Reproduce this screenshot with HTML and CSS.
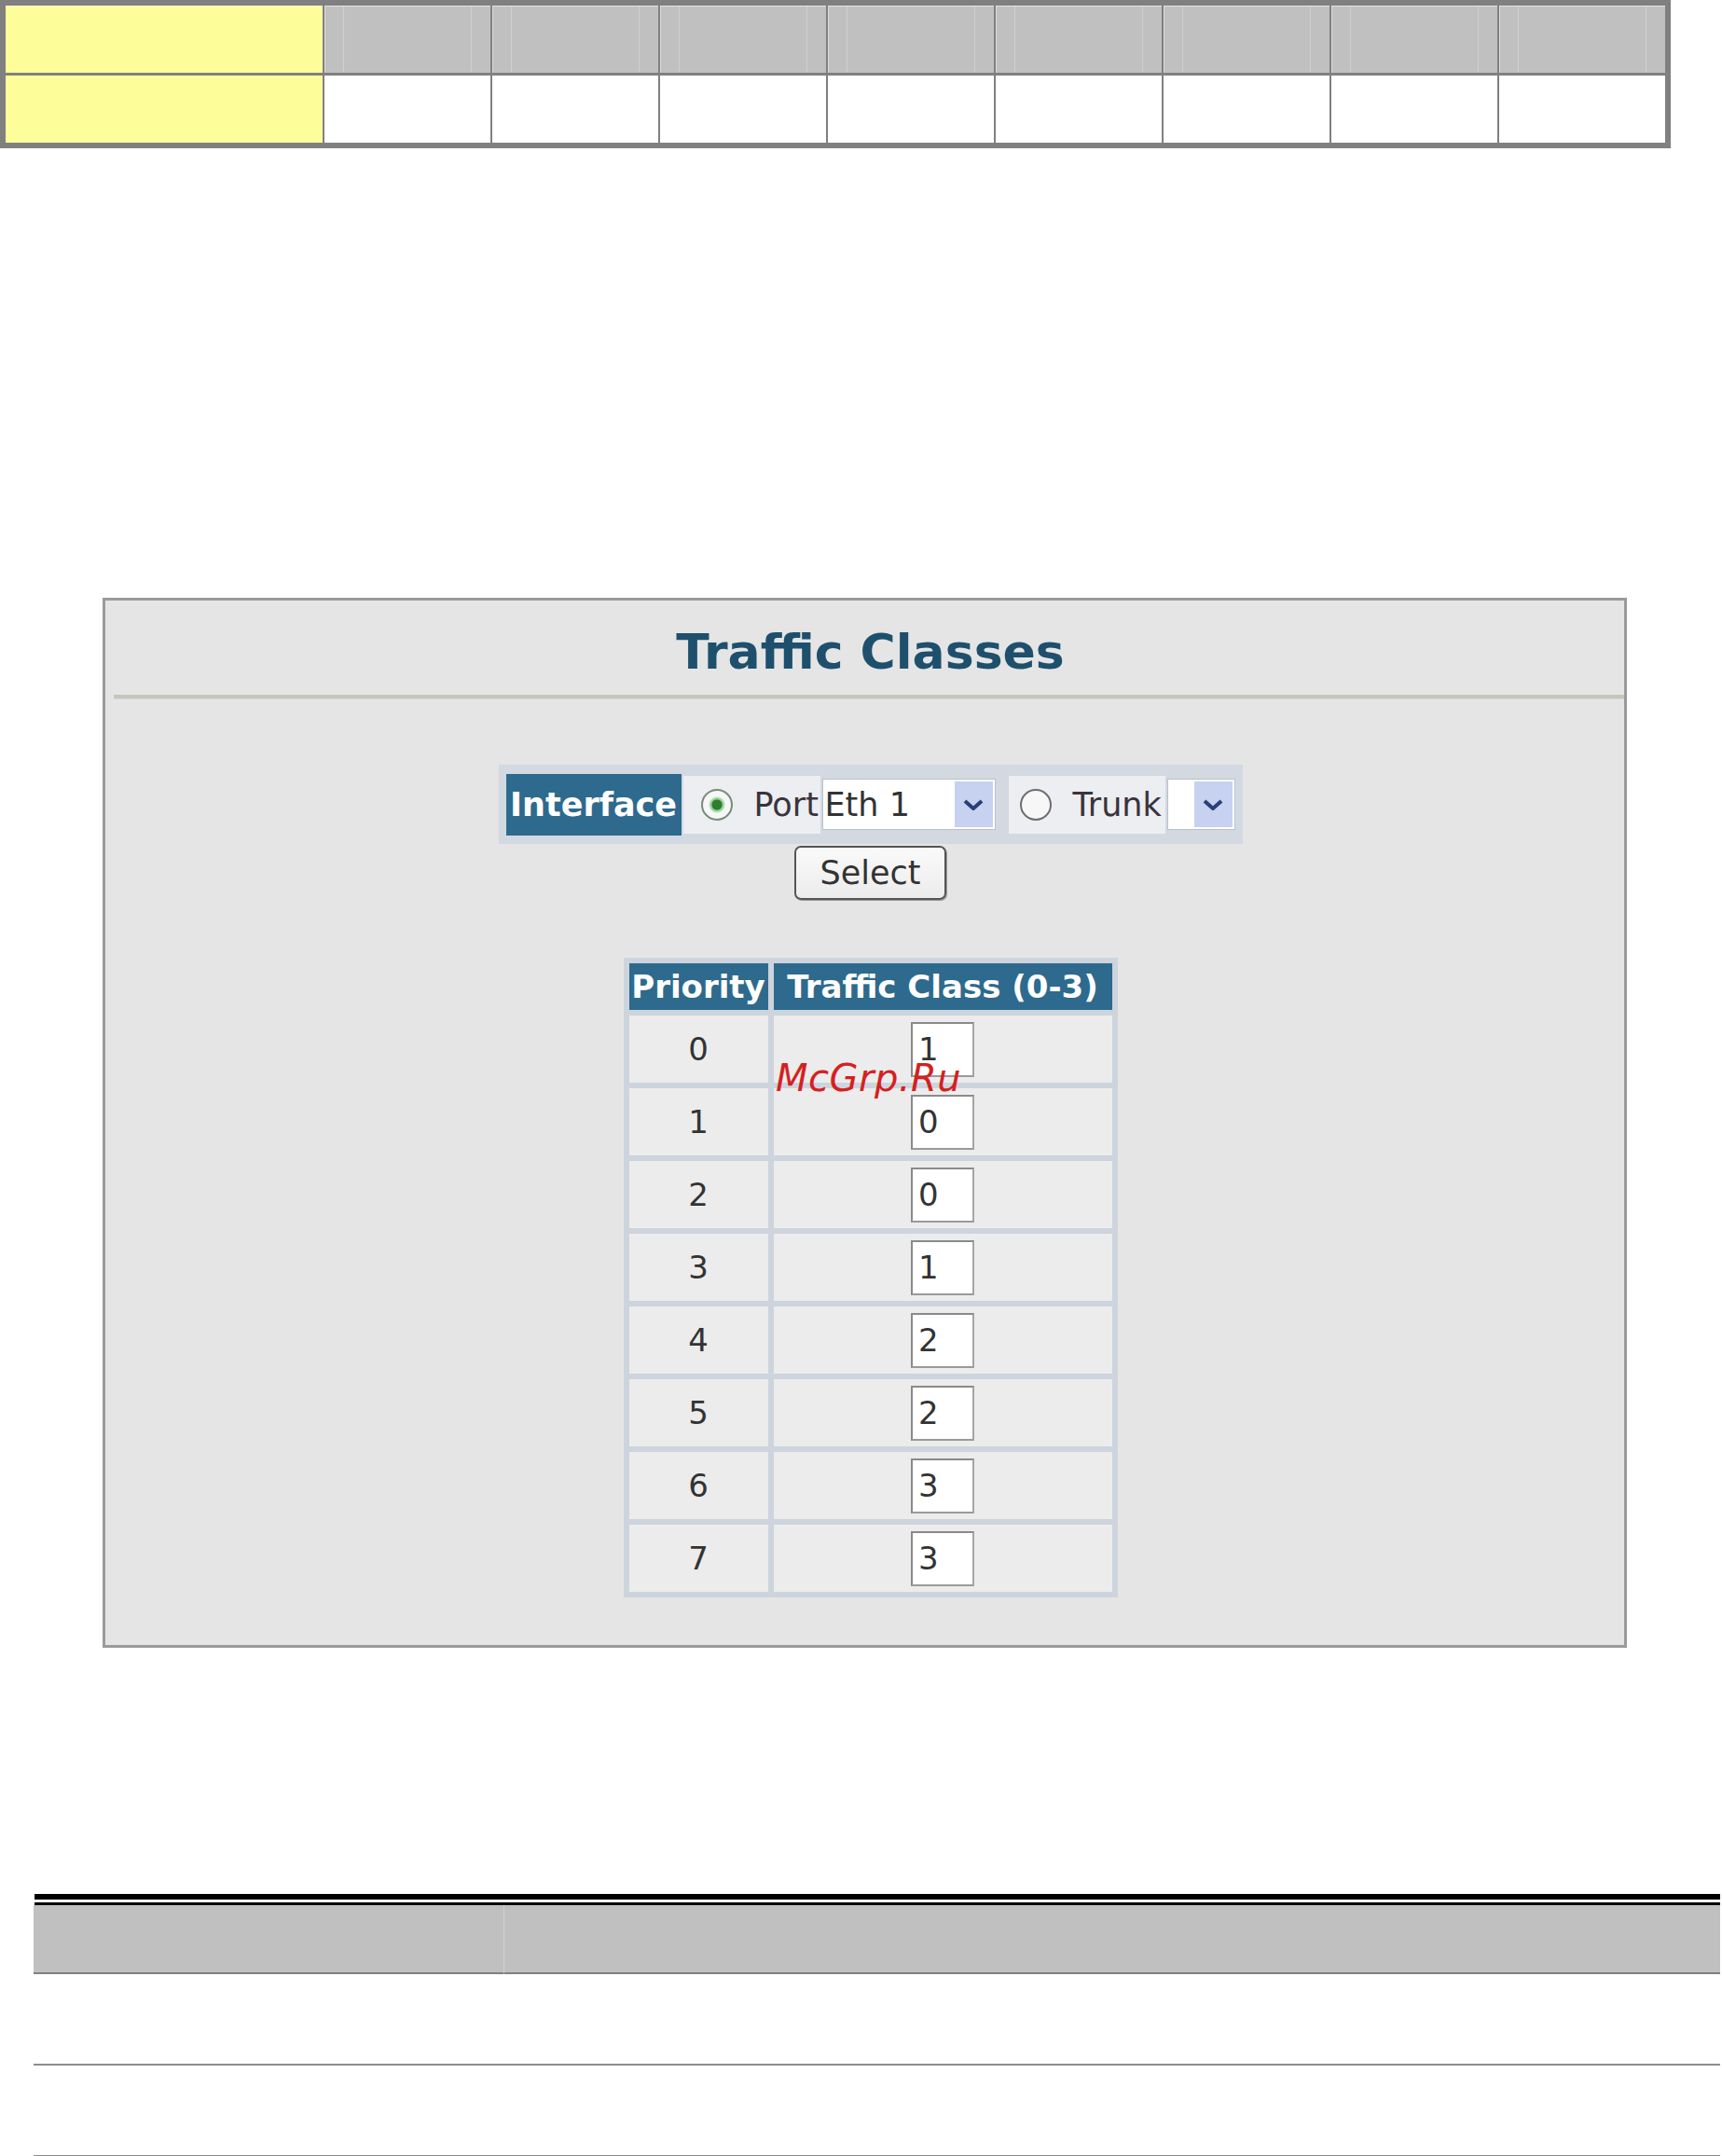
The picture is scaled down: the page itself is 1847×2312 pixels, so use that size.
FILE: index.html
```html
<!DOCTYPE html>
<html lang="en">
<head>
<meta charset="utf-8">
<title>Traffic Classes</title>
<link rel="stylesheet" href="styles.css">
</head>
<body>
<div class="top-table">
  <div class="cell yellow yellow-head"></div>
  <div class="cell th"></div><div class="cell th"></div><div class="cell th"></div><div class="cell th"></div>
  <div class="cell th"></div><div class="cell th"></div><div class="cell th"></div><div class="cell th"></div>
  <div class="cell yellow"></div>
  <div class="cell td"></div><div class="cell td"></div><div class="cell td"></div><div class="cell td"></div>
  <div class="cell td"></div><div class="cell td"></div><div class="cell td"></div><div class="cell td"></div>
</div>

<div class="panel">
  <h1 class="panel-title">Traffic Classes</h1>
  <div class="panel-rule"></div>
  <div class="panel-body">
    <div class="iface">
      <div class="iface-label">Interface</div>
      <div class="iface-opt port-opt"><span class="radio on"></span><span class="opt-text">Port</span></div>
      <div class="select eth"><span class="select-val">Eth 1</span><span class="select-btn"><svg width="22" height="12" viewBox="0 0 22 12"><path d="M2 2 L11 10 L20 2" stroke="#2a3f7a" stroke-width="4" fill="none"/></svg></span></div>
      <div class="iface-opt trunk-opt"><span class="radio"></span><span class="opt-text">Trunk</span></div>
      <div class="select trunk"><span class="select-val"></span><span class="select-btn"><svg width="22" height="12" viewBox="0 0 22 12"><path d="M2 2 L11 10 L20 2" stroke="#2a3f7a" stroke-width="4" fill="none"/></svg></span></div>
    </div>
    <div class="btn-row"><button class="btn" type="button">Select</button></div>
    <div class="prio-table">
      <div class="ph">Priority</div><div class="ph">Traffic Class (0-3)</div>
      <div class="pc">0</div><div class="pc"><span class="inp">1</span></div>
      <div class="pc">1</div><div class="pc"><span class="inp">0</span></div>
      <div class="pc">2</div><div class="pc"><span class="inp">0</span></div>
      <div class="pc">3</div><div class="pc"><span class="inp">1</span></div>
      <div class="pc">4</div><div class="pc"><span class="inp">2</span></div>
      <div class="pc">5</div><div class="pc"><span class="inp">2</span></div>
      <div class="pc">6</div><div class="pc"><span class="inp">3</span></div>
      <div class="pc">7</div><div class="pc"><span class="inp">3</span></div>
    </div>
  </div>
</div>

<div class="watermark">McGrp.Ru</div>

<div class="bottom">
  <div class="rule-thick"></div>
  <div class="rule-thin"></div>
  <div class="desc-table">
    <div class="dh dh-first"></div><div class="dh"></div>
    <div class="dr"></div><div class="dr"></div>
    <div class="dr"></div><div class="dr"></div>
  </div>
</div>
</body>
</html>
```

FILE: styles.css
```css
html, body {
  margin: 0;
  padding: 0;
  background: #ffffff;
}
body {
  font-family: "DejaVu Sans", Verdana, sans-serif;
  color: #333333;
  width: 1847px;
  min-height: 2312px;
}

/* ---------- top table ---------- */
.top-table {
  display: grid;
  grid-template-columns: 340px repeat(8, 178px);
  grid-template-rows: 72px 72px;
  column-gap: 2px;
  row-gap: 3px;
  padding: 6px;
  background: #808080;
  width: fit-content;
}
.cell { box-sizing: border-box; }
.yellow { background: #fdfe9a; }
.yellow-head { border-top: 1px solid #ffffd8; }
.th {
  background:
    linear-gradient(to right,
      #dcdcdc 0, #dcdcdc 1px, transparent 1px,
      transparent 20px, #cfcfcf 20px, #cfcfcf 21px, transparent 21px,
      transparent calc(100% - 21px), #cfcfcf calc(100% - 21px), #cfcfcf calc(100% - 20px), transparent calc(100% - 20px)),
    #c0c0c0;
  border-top: 1px solid #e6e6e6;
}
.td { background: #ffffff; }

/* ---------- panel ---------- */
.panel {
  box-sizing: border-box;
  margin: 482px 0 0 110px;
  width: 1635px;
  border: 3px solid #9a9a9a;
  background: #e5e5e5;
  padding-bottom: 51px;
}
.panel-title {
  margin: 25px 0 0 0;
  padding-left: 12px;
  text-align: center;
  font-size: 52px;
  line-height: 60px;
  font-weight: bold;
  color: #1e506d;
}
.panel-rule {
  margin: 16px 0 0 9px;
  height: 5px;
  background: #c4c5bc;
  border-bottom: 1px solid #d8d9d0;
  box-sizing: border-box;
}
.panel-body {
  padding-left: 12px;
  display: flex;
  flex-direction: column;
  align-items: center;
}

/* interface row */
.iface {
  margin-top: 70px;
  display: flex;
  align-items: center;
  height: 85px;
  box-sizing: border-box;
  padding: 0 8px;
  background: #d3d9e1;
}
.iface-label {
  width: 188px;
  height: 66px;
  background: #2d6a8e;
  color: #ffffff;
  font-weight: bold;
  font-size: 35px;
  display: flex;
  align-items: center;
  justify-content: center;
}
.iface-opt {
  height: 62px;
  background: #eceef1;
  display: flex;
  align-items: center;
  font-size: 35px;
  color: #3a333c;
}
.port-opt { width: 147px; margin-left: 2px; }
.trunk-opt { width: 168px; margin-left: 14px; }
.port-opt .radio { margin-left: 19px; }
.trunk-opt .radio { margin-left: 12px; }
.opt-text { margin-left: 23px; white-space: nowrap; }
.radio {
  box-sizing: border-box;
  width: 34px;
  height: 34px;
  border-radius: 50%;
  border: 2px solid #6e6e6e;
  background: #f7f7f7;
  flex: none;
}
.radio.on {
  border-color: #7a8c7a;
  background: radial-gradient(circle, #2f7d2f 0, #2f7d2f 5px, #86c986 6px, #bfe5bf 8px, #f7f7f7 9px);
}
.select {
  box-sizing: border-box;
  height: 55px;
  background: #ffffff;
  border: 1px solid #b9c1cc;
  display: flex;
  align-items: stretch;
  margin-left: 2px;
}
.eth { width: 186px; }
.trunk { width: 73px; }
.select-val {
  flex: 1;
  font-size: 35px;
  color: #333333;
  padding-left: 2px;
  display: flex;
  align-items: center;
}
.select-btn {
  width: 41px;
  margin: 2px;
  background: #c6d2f0;
  display: flex;
  align-items: center;
  justify-content: center;
}

/* select button */
.btn-row {
  margin-top: 2px;
  display: flex;
  justify-content: center;
}
.btn {
  box-sizing: border-box;
  width: 163px;
  height: 58px;
  border: 2px solid #555555;
  border-radius: 7px;
  background: linear-gradient(#fafafa, #ececec);
  font-family: "DejaVu Sans", Verdana, sans-serif;
  font-size: 35px;
  color: #333333;
  padding: 0;
  box-shadow: 1px 1px 0 #9a9a9a;
}

/* priority table */
.prio-table {
  margin-top: 62px;
  display: grid;
  grid-template-columns: 149px 363px;
  grid-template-rows: 50px repeat(8, 72px);
  gap: 6px;
  padding: 6px;
  background: #cdd4dd;
}
.ph {
  background: #2e6a8d;
  color: #ffffff;
  font-weight: bold;
  font-size: 34px;
  display: flex;
  align-items: center;
  justify-content: center;
  white-space: nowrap;
}
.pc {
  background: #ececec;
  font-size: 34px;
  color: #333333;
  display: flex;
  align-items: center;
  justify-content: center;
}
.inp {
  box-sizing: border-box;
  width: 68px;
  height: 59px;
  background: #ffffff;
  border: 2px solid #8a8a8a;
  border-right-color: #a5a5a5;
  border-bottom-color: #9a9a9a;
  padding-left: 6px;
  display: flex;
  align-items: center;
  font-size: 34px;
  color: #333333;
}

/* watermark overlay */
.watermark {
  position: absolute;
  left: 832px;
  top: 1136px;
  font-family: "DejaVu Sans", Verdana, sans-serif;
  font-style: italic;
  font-size: 40px;
  line-height: 40px;
  color: #d42121;
  letter-spacing: 0.5px;
}

/* ---------- bottom table ---------- */
.bottom {
  margin: 264px 2px 0 36px;
}
.rule-thick {
  height: 6px;
  background: #000000;
  margin-left: 1px;
}
.rule-thin {
  height: 3px;
  margin-top: 3px;
  margin-left: 1px;
  background: #000000;
}
.desc-table {
  display: grid;
  grid-template-columns: 505px 1fr;
  grid-template-rows: 74px 98px 98px;
}
.dh {
  background: #c0c0c0;
  border-bottom: 2px solid #808080;
  box-sizing: border-box;
}
.dh-first { border-right: 1px solid #d2d2d2; }
.dr {
  border-bottom: 2px solid #8c8c8c;
  box-sizing: border-box;
}
```
